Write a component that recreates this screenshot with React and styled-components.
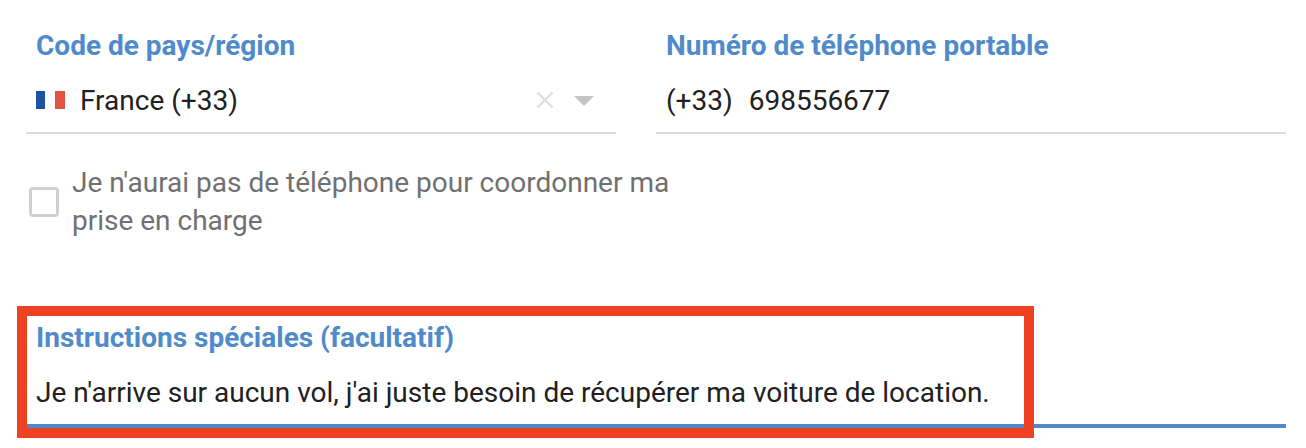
import React from 'react';
import styled, {createGlobalStyle} from 'styled-components';

const GlobalStyle = createGlobalStyle`
  html, body {
    margin: 0;
    background: #fff;
    font-family: Roboto, "Liberation Sans", sans-serif;
  }
`

const Page = styled.div`
  width: 1306px;
  height: 448px;
  box-sizing: border-box;
  padding: 30px 20px 0 26px;
  overflow: hidden;
`

const Row = styled.div`
  display: grid;
  grid-template-columns: 590px 630px;
  column-gap: 40px;
`

const Field = styled.div`
  display: flex;
  flex-direction: column;
`

const Label = styled.label`
  padding-left: 10px;
  font-size: 28px;
  line-height: 32px;
  font-weight: 700;
  color: #4f8bca;
  white-space: nowrap;
`

const Control = styled.div`
  display: flex;
  align-items: center;
  height: 64px;
  padding-top: 6px;
  border-bottom: 2px solid #dcdcdc;
  padding-left: 10px;
  font-size: 28px;
  color: #212121;
  white-space: pre;
`

const Prefix = styled.span`
  margin-right: 16px;
`

const Flag = styled.svg`
  width: 30px;
  height: 18px;
  margin-right: 14px;
  flex: none;
`

const Clear = styled.svg`
  width: 18px;
  height: 18px;
  margin-left: auto;
  margin-right: 20px;
`

const Caret = styled.svg`
  width: 20px;
  height: 10px;
  margin: 2px 22px 0 0;
`

const CheckRow = styled.div`
  display: flex;
  align-items: center;
  width: 660px;
  margin: 30px 0 0 3px;
  gap: 13px;
`

const Box = styled.span`
  width: 30px;
  height: 30px;
  flex: none;
  box-sizing: border-box;
  border: 3px solid #d0d0d0;
  border-radius: 4px;
`

const CheckText = styled.span`
  font-size: 28px;
  line-height: 38px;
  color: #707070;
`

const Note = styled.div`
  position: relative;
  margin-top: 76px;
  height: 108px;
  border-bottom: 4px solid #4f8bca;
  width: 1260px;
`

const NoteLabel = styled(Label)`
  display: block;
  padding-top: 6px;
`

const NoteText = styled.div`
  padding: 24px 0 0 10px;
  font-size: 28px;
  line-height: 30px;
  color: #212121;
  white-space: nowrap;
`

const Highlight = styled.div`
  position: absolute;
  left: -9px;
  top: -10px;
  width: 1017px;
  height: 132px;
  box-sizing: border-box;
  border: 10px solid #ee4023;
  pointer-events: none;
`

export default function App() {
    return (
        <Page>
            <GlobalStyle/>
            <Row>
                <Field>
                    <Label>Code de pays/région</Label>
                    <Control>
                        <Flag viewBox="0 0 30 18">
                            <rect width="9" height="18" fill="#1c54a0"/>
                            <rect x="19" width="10" height="18" fill="#e35344"/>
                        </Flag>
                        France (+33)
                        <Clear viewBox="0 0 18 18">
                            <path d="M1.5 1.5l15 15M16.5 1.5l-15 15" stroke="#dedede" strokeWidth="2.4" fill="none"/>
                        </Clear>
                        <Caret viewBox="0 0 20 10">
                            <path d="M0 0h20l-10 10z" fill="#c4c4c4"/>
                        </Caret>
                    </Control>
                </Field>
                <Field>
                    <Label>Numéro de téléphone portable</Label>
                    <Control><Prefix>(+33)</Prefix>698556677</Control>
                </Field>
            </Row>
            <CheckRow>
                <Box/>
                <CheckText>Je n'aurai pas de téléphone pour coordonner ma prise en charge</CheckText>
            </CheckRow>
            <Note>
                <NoteLabel>Instructions spéciales (facultatif)</NoteLabel>
                <NoteText>Je n'arrive sur aucun vol, j'ai juste besoin de récupérer ma voiture de location.</NoteText>
                <Highlight/>
            </Note>
        </Page>
    );
}
